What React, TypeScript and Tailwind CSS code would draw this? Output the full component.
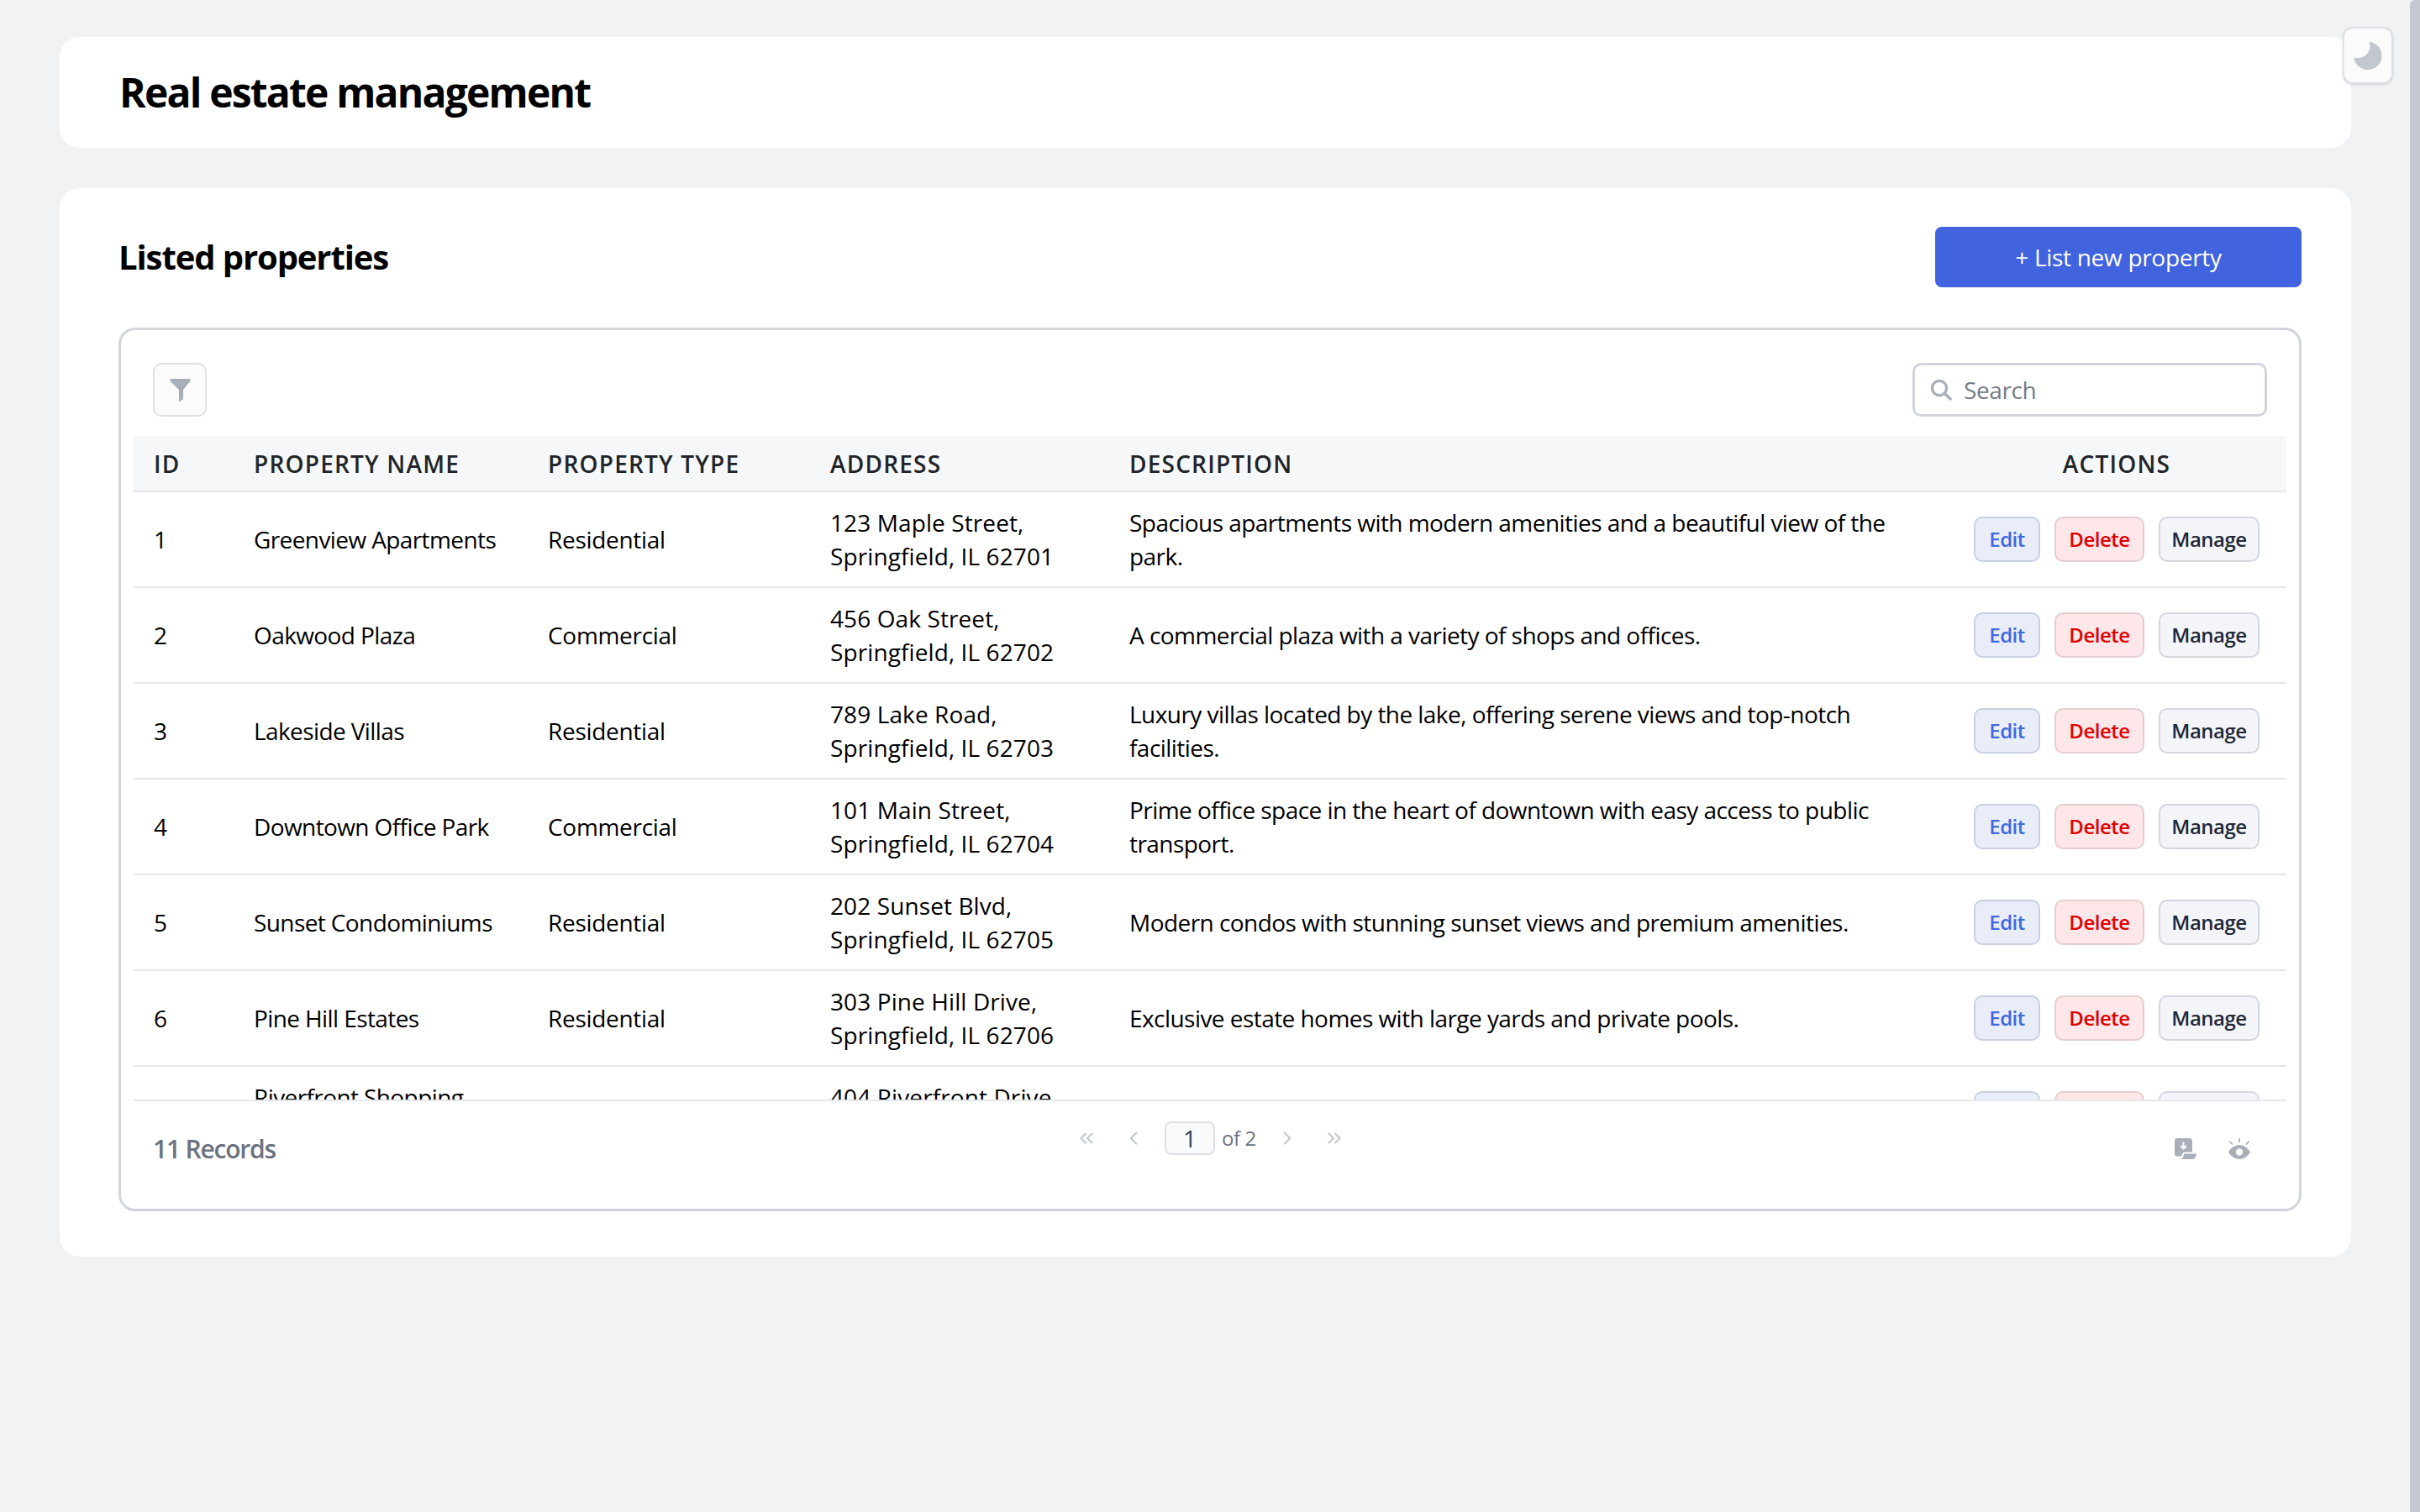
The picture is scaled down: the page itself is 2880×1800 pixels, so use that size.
import { ChevronLeft, ChevronRight, ChevronsLeft, ChevronsRight } from 'lucide-react'

type Property = {
  id: number
  name: string
  type: string
  address: string[]
  description: string
}

const properties: Property[] = [
  { id: 1, name: 'Greenview Apartments', type: 'Residential', address: ['123 Maple Street,', 'Springfield, IL 62701'], description: 'Spacious apartments with modern amenities and a beautiful view of the park.' },
  { id: 2, name: 'Oakwood Plaza', type: 'Commercial', address: ['456 Oak Street,', 'Springfield, IL 62702'], description: 'A commercial plaza with a variety of shops and offices.' },
  { id: 3, name: 'Lakeside Villas', type: 'Residential', address: ['789 Lake Road,', 'Springfield, IL 62703'], description: 'Luxury villas located by the lake, offering serene views and top-notch facilities.' },
  { id: 4, name: 'Downtown Office Park', type: 'Commercial', address: ['101 Main Street,', 'Springfield, IL 62704'], description: 'Prime office space in the heart of downtown with easy access to public transport.' },
  { id: 5, name: 'Sunset Condominiums', type: 'Residential', address: ['202 Sunset Blvd,', 'Springfield, IL 62705'], description: 'Modern condos with stunning sunset views and premium amenities.' },
  { id: 6, name: 'Pine Hill Estates', type: 'Residential', address: ['303 Pine Hill Drive,', 'Springfield, IL 62706'], description: 'Exclusive estate homes with large yards and private pools.' },
  { id: 7, name: 'Riverfront Shopping Center', type: 'Commercial', address: ['404 Riverfront Drive,', 'Springfield, IL 62707'], description: 'A vibrant shopping center on the river.' },
]

const headers = ['ID', 'PROPERTY NAME', 'PROPERTY TYPE', 'ADDRESS', 'DESCRIPTION']

function MoonIcon() {
  return (
    <svg viewBox="0 0 24 24" className="w-[34px] h-[34px] text-[#c3c7cf]" fill="currentColor">
      <path d="M13 .5A11.800 11.800 0 1 1 .2 13.500 10 10 0 0 0 13 .5Z" />
    </svg>
  )
}

function FilterIcon() {
  return (
    <svg viewBox="0 0 25 27" className="w-[25px] h-[27px] text-[#a9afb8]" fill="currentColor">
      <path d="M2 0h21c1.500 0 2.300 1.600 1.400 2.800L16 13v10.500c0 .6-.2 1-.6 1.300l-3 2c-.5.3-1.400 0-1.400-.8V13L.6 2.800C-.3 1.600.5 0 2 0Z" />
    </svg>
  )
}

function SearchIcon() {
  return (
    <svg viewBox="0 0 26 26" className="w-[26px] h-[26px] text-[#a9afb8]" fill="none" stroke="currentColor" strokeWidth="3.400" strokeLinecap="round">
      <circle cx="11" cy="11" r="8.600" />
      <path d="m17.500 17.500 6.500 6.500" />
    </svg>
  )
}

function ExportIcon() {
  return (
    <svg viewBox="0 0 26 25" className="w-[26px] h-[25px] text-[#a9afb8]">
      <path fill="currentColor" d="M3 0h15c1.700 0 3 1.300 3 3v13.500h-8.500c-1.500 0-2.500.8-3.200 2L8 21.500H3c-1.700 0-3-1.300-3-3V3c0-1.700 1.300-3 3-3Z" />
      <path fill="currentColor" d="M12.500 18.500H26l-1 3.200c-.5 1.800-1.800 3.300-3.500 3.300H6.500c2.500-.8 3.800-2.200 4.300-4.700.2-1 .8-1.800 1.700-1.800Z" />
      <path fill="none" stroke="#fff" strokeWidth="2" strokeLinecap="round" strokeLinejoin="round" d="M10.500 5.500v6.500M7.500 9.500l3 3 3-3" />
    </svg>
  )
}

function EyeIcon() {
  return (
    <svg viewBox="0 0 26 25" className="w-[26px] h-[25px] text-[#a9afb8]">
      <path fill="currentColor" fillRule="evenodd" d="M13 8c5.600 0 10.300 3.600 13 8.500-2.700 4.900-7.400 8.500-13 8.500S2.700 21.400 0 16.500C2.700 11.600 7.400 8 13 8Zm0 4.300a4.200 4.200 0 1 0 0 8.400 4.200 4.200 0 0 0 0-8.400Z" />
      <path fill="none" stroke="currentColor" strokeWidth="1.800" strokeLinecap="round" d="M13 .8v3.500M1.800 4.300l2.700 2.500M24.200 4.300l-2.700 2.500" />
    </svg>
  )
}

function RowActions() {
  return (
    <div className="flex items-center justify-center gap-[17px] tracking-[-0.5px]">
      <button className="w-[79px] h-[54px] rounded-[10px] border-2 border-[#c9d0e2] bg-[#e9edfa] text-[#4169e1] text-[24px] font-semibold">
        Edit
      </button>
      <button className="w-[107px] h-[54px] rounded-[10px] border-2 border-[#e3cdd2] bg-[#fde7e8] text-[#e00000] text-[24px] font-semibold">
        Delete
      </button>
      <button className="w-[120px] h-[54px] rounded-[10px] border-2 border-[#d3d6de] bg-[#f4f5f9] text-[#1f2937] text-[24px] font-semibold">
        Manage
      </button>
    </div>
  )
}

export default function App() {
  return (
    <div className="relative flex min-h-screen bg-[#f1f2f4] text-black font-['Open_Sans',sans-serif]">
      <main className="flex-1 pl-[71px] pr-[70px] pt-[44px]">
        <div className="h-[132px] rounded-[24px] bg-white px-[71px] flex items-center">
          <h1 className="text-[48px] font-bold tracking-[-1.8px]">Real estate management</h1>
        </div>

        <section className="mt-[48px] h-[1272px] rounded-[24px] bg-white pl-[70px] pr-[59px] pt-[46px]">
          <div className="flex items-center justify-between h-[72px]">
            <h2 className="text-[40px] font-bold tracking-[-1.1px]">Listed properties</h2>
            <button className="w-[436px] h-[72px] rounded-[8px] bg-[#4163de] text-white text-[28px] font-medium tracking-[-0.3px]">
              + List new property
            </button>
          </div>

          <div className="mt-[48px] h-[1052px] rounded-[20px] border-[3px] border-[#d1d5db] px-[15px]">
            <div className="h-[126px] pt-[39px] px-[23px] flex justify-between">
              <button className="w-[64px] h-[64px] rounded-[10px] border-2 border-[#dfe1e7] bg-[#fbfbfc] flex items-center justify-center">
                <FilterIcon />
              </button>
              <div className="w-[422px] h-[64px] rounded-[10px] border-[3px] border-[#d1d5db] bg-white flex items-center gap-[14px] px-[18px]">
                <SearchIcon />
                <span className="text-[28px] text-[#757b85] tracking-[-0.4px]">Search</span>
              </div>
            </div>

            <div className="h-[792px] overflow-hidden border-b-2 border-[#e5e7eb]">
              <table className="w-[2562px] table-fixed border-collapse">
                <colgroup>
                  <col className="w-[119px]" />
                  <col className="w-[350px]" />
                  <col className="w-[336px]" />
                  <col className="w-[356px]" />
                  <col className="w-[997px]" />
                  <col className="w-[404px]" />
                </colgroup>
                <thead>
                  <tr className="h-[66px] bg-[#f6f7f9] border-b-2 border-[#e5e7eb]">
                    {headers.map((h) => (
                      <th key={h} className="px-[24px] text-left text-[28px] font-semibold tracking-[1.2px] text-[#212529]">
                        {h}
                      </th>
                    ))}
                    <th className="px-[24px] text-center text-[28px] font-semibold tracking-[1.2px] text-[#212529]">ACTIONS</th>
                  </tr>
                </thead>
                <tbody>
                  {properties.map((p) => (
                    <tr key={p.id} className="h-[114px] border-b-2 border-[#e5e7eb] text-[28px] leading-[40px] tracking-[-0.6px] align-middle">
                      <td className="px-[24px]">{p.id}</td>
                      <td className="px-[24px]">{p.name}</td>
                      <td className="px-[24px] tracking-[-0.3px]">{p.type}</td>
                      <td className="px-[24px] tracking-[0.1px]">
                        {p.address[0]}
                        <br />
                        {p.address[1]}
                      </td>
                      <td className="px-[24px] tracking-[-0.55px]">{p.description}</td>
                      <td className="px-[24px]">
                        <RowActions />
                      </td>
                    </tr>
                  ))}
                </tbody>
              </table>
            </div>

            <div className="relative h-[125px] px-[23px]">
              <div className="absolute left-[23px] top-[34px] text-[30px] font-semibold text-[#6b7280] tracking-[-1.2px]">11 Records</div>
              <div className="absolute left-[1121px] top-[24px] flex items-center h-[40px] text-[#c3c7cf]">
                <ChevronsLeft className="w-[26px] h-[26px]" />
                <ChevronLeft className="w-[26px] h-[26px] ml-[30px]" />
                <div className="ml-[24px] w-[60px] h-[40px] rounded-[8px] border-2 border-[#dcdfe5] bg-[#f9fafb] text-[28px] text-[#374151] flex items-center justify-center">
                  1
                </div>
                <span className="ml-[8px] text-[24px] font-medium text-[#6b7280] tracking-[-0.4px]">of 2</span>
                <ChevronRight className="w-[26px] h-[26px] ml-[24px]" />
                <ChevronsRight className="w-[26px] h-[26px] ml-[30px]" />
              </div>
              <div className="absolute right-[43px] top-[44px] flex gap-[38px]">
                <ExportIcon />
                <EyeIcon />
              </div>
            </div>
          </div>
        </section>
      </main>

      <div className="w-[12px] bg-[#c5c8ce] rounded-tl-[6px]" />

      <button className="absolute left-[2788px] top-[32px] w-[60px] h-[68px] rounded-[12px] border-2 border-[#dcdfe5] bg-[#fbfbfc] shadow-sm flex items-center justify-center">
        <MoonIcon />
      </button>
    </div>
  )
}
